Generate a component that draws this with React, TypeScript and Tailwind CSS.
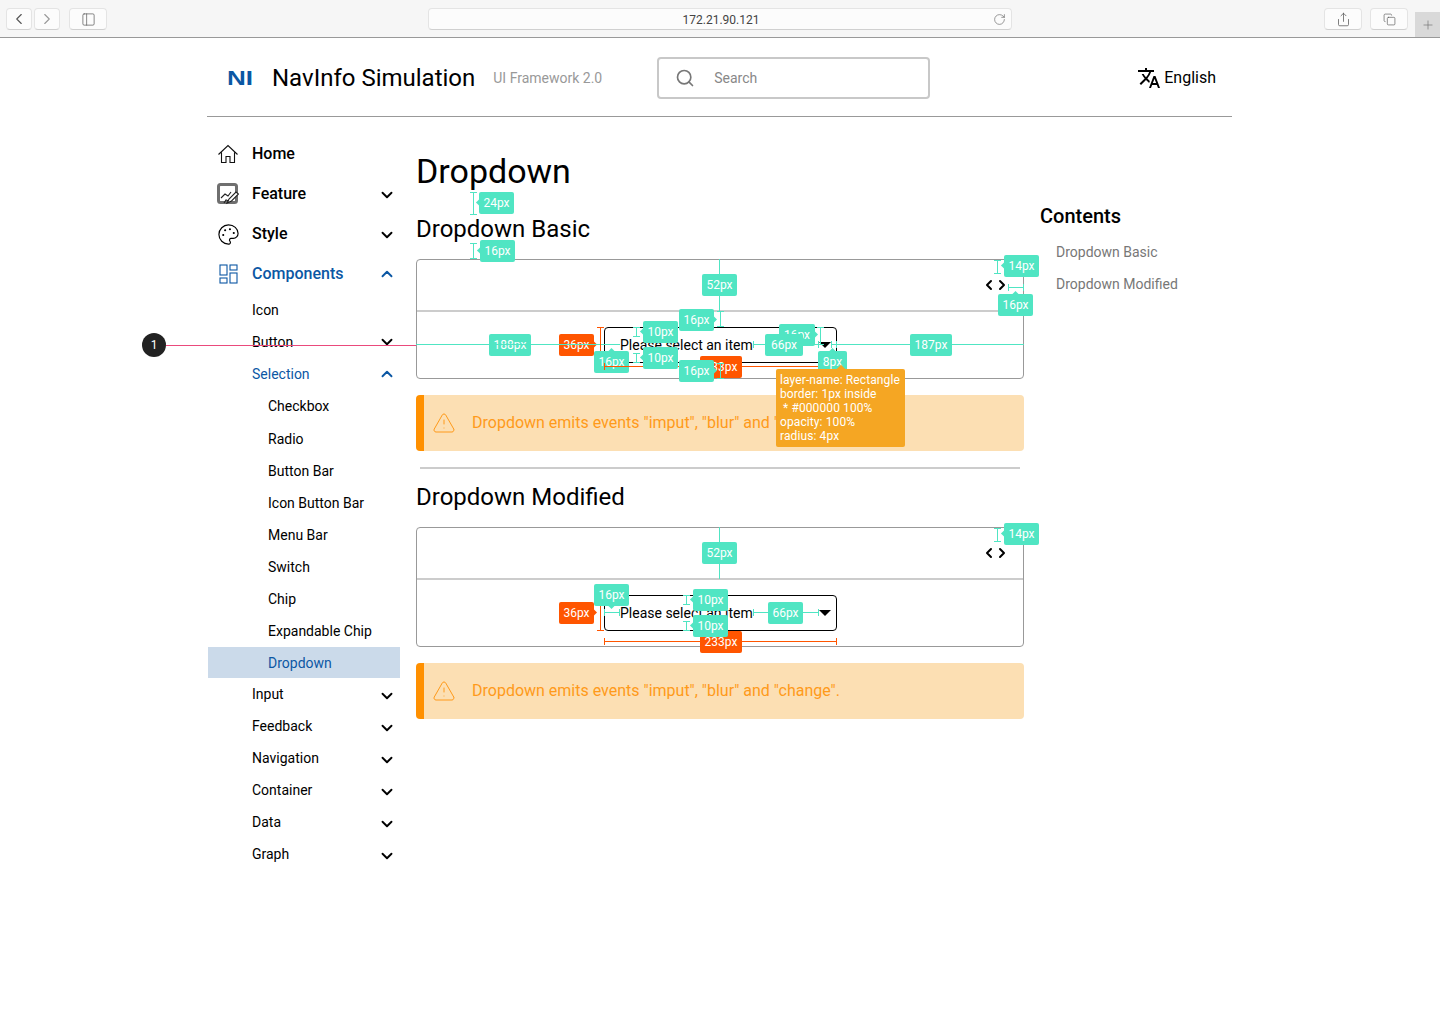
import { ChevronDown, ChevronLeft, ChevronRight, ChevronUp, Copy, Palette, PanelLeft, Plus, RotateCw, Search, Share, TriangleAlert } from "lucide-react";
import { MdTranslate } from "react-icons/md";
import type { ReactNode } from "react";

const SUB_TOP = ["Input", "Feedback", "Navigation", "Container", "Data", "Graph"];
const SELECTION = ["Radio", "Button Bar", "Icon Button Bar", "Menu Bar", "Switch", "Chip", "Expandable Chip"];

function HomeIcon() {
  return (
    <svg viewBox="0 0 22 22" className="h-[22px] w-[22px]" fill="none" stroke="#111" strokeWidth="1.1">
      <path d="M1.5 11.5L11 2.5l9.5 9M4.5 9.5v10h4.5v-6h4v6h4.5v-10" />
    </svg>
  );
}

function FeatureIcon() {
  return (
    <svg viewBox="0 0 22 22" className="h-[22px] w-[22px]" fill="none">
      <rect x="1.5" y="1.5" width="18" height="18" rx="2" stroke="#6f6f6f" strokeWidth="3" />
      <rect x="3" y="4" width="15" height="13" fill="#fff" />
      <path d="M4 15l4-4 3 2 3-4" stroke="#222" strokeWidth="1.1" />
      <path d="M10 20l2-4 7-7 2.5 2-7 7z" fill="#fff" stroke="#222" strokeWidth="1.1" />
      <path d="M7 20l2-3 3 1" stroke="#222" strokeWidth="1.1" />
    </svg>
  );
}

function ComponentsIcon() {
  return (
    <svg viewBox="0 0 20 20" className="ml-0.5 h-5 w-5" fill="none" stroke="#0b57a4" strokeWidth="1.1">
      <rect x="1" y="1" width="7" height="10" />
      <rect x="11" y="1" width="7" height="5" />
      <rect x="1" y="14" width="7" height="5" />
      <rect x="11" y="9" width="7" height="10" />
    </svg>
  );
}

function TopItem({ icon, label, open, active }: { icon: ReactNode; label: string; open?: boolean; active?: boolean }) {
  return (
    <div className={`flex h-10 items-center pl-[9px] pr-1 ${active ? "text-[#0b57a4]" : "text-black"}`}>
      <span className="flex w-[35px] items-center">{icon}</span>
      <span className="flex-1 text-base font-medium">{label}</span>
      {open === undefined ? null : open ? <ChevronUp size={18} strokeWidth={2.5} /> : <ChevronDown size={18} strokeWidth={2.5} className="mt-0.5" />}
    </div>
  );
}

function SubItem({ label, open, active, low }: { label: string; open?: boolean; active?: boolean; low?: boolean }) {
  return (
    <div className={`flex h-8 items-center pl-11 pr-1 text-sm ${active ? "text-[#0b57a4]" : "text-black"}`}>
      <span className="flex-1">{label}</span>
      {open === undefined ? null : open ? <ChevronUp size={18} strokeWidth={2.5} /> : <ChevronDown size={18} strokeWidth={2.5} className={low ? "mt-1" : ""} />}
    </div>
  );
}

function Sidebar() {
  return (
    <aside className="ml-px w-[192px] shrink-0 pt-[17px]">
      <TopItem icon={<HomeIcon />} label="Home" />
      <TopItem icon={<FeatureIcon />} label="Feature" open={false} />
      <TopItem icon={<Palette size={23} strokeWidth={1.2} />} label="Style" open={false} />
      <TopItem icon={<ComponentsIcon />} label="Components" open active />
      <SubItem label="Icon" />
      <SubItem label="Button" open={false} />
      <SubItem label="Selection" open active />
      <div className="mb-px flex h-8 items-center pl-[60px] text-sm text-black">Checkbox</div>
      {SELECTION.map((item) => (
        <div key={item} className="flex h-8 items-center pl-[60px] text-sm text-black">
          {item}
        </div>
      ))}
      <div className="flex h-[31px] items-center bg-[#cbdaea] pl-[60px] text-sm text-[#0b57a4]">Dropdown</div>
      {SUB_TOP.map((item) => (
        <SubItem key={item} label={item} open={false} low />
      ))}
    </aside>
  );
}

function Demo() {
  return (
    <div className="h-[120px] rounded border border-[#999]">
      <div className="flex h-[50px] items-center justify-end pr-[13px]">
        <ChevronLeft size={16} strokeWidth={3} className="text-black" />
        <ChevronRight size={16} strokeWidth={3} className="-ml-[3px] text-black" />
      </div>
      <div className="h-0.5 bg-[#ccc]" />
      <div className="flex justify-center pt-[15px]">
        <div className="ml-px flex h-9 w-[233px] items-center rounded border border-black pl-[15px] pr-[5px] text-sm text-black">
          <span className="flex-1">Please select an item</span>
          <span className="h-0 w-0 border-x-[6px] border-t-[6px] border-x-transparent border-t-black" />
        </div>
      </div>
    </div>
  );
}

function Notice() {
  return (
    <div className="mt-4 flex h-14 items-center rounded border-l-8 border-[#ff9000] bg-[#fcdfb3] pl-2 text-base text-[#ff9a1a]">
      <TriangleAlert size={24} strokeWidth={1} />
      <span className="ml-4">Dropdown emits events "imput", "blur" and "change".</span>
    </div>
  );
}

/* ---- The redline overlay ---- */

function Tag({ className, arrow, children }: { className: string; arrow?: string; children: string }) {
  return (
    <div className={`absolute flex h-[22px] items-center justify-center rounded-[2px] text-xs text-white ${className}`}>
      {arrow ? <span className={`absolute h-[5px] w-[5px] rotate-45 bg-inherit ${arrow}`} /> : null}
      <span className="relative">{children}</span>
    </div>
  );
}

function Ruler({ className }: { className: string }) {
  return <div className={`absolute ${className}`} />;
}

const TEAL = "bg-[#50e5c3]";
const RED = "bg-[#ff5500]";
const V = "w-[7px] border-y border-[#50e5c3] bg-[linear-gradient(#50e5c3,#50e5c3)] bg-[length:1px_100%] bg-center bg-no-repeat";
const VR = "w-[7px] border-y border-[#ff5500] bg-[linear-gradient(#ff5500,#ff5500)] bg-[length:1px_100%] bg-center bg-no-repeat";
const H = "h-[7px] border-x border-[#50e5c3] bg-[linear-gradient(#50e5c3,#50e5c3)] bg-[length:100%_1px] bg-center bg-no-repeat";
const HR = "h-[7px] border-x border-[#ff5500] bg-[linear-gradient(#ff5500,#ff5500)] bg-[length:100%_1px] bg-center bg-no-repeat";

function Redlines() {
  return (
    <div className="pointer-events-none absolute inset-0">
      <div className="absolute left-[142px] top-[333px] flex h-6 w-6 items-center justify-center rounded-full bg-[#222] text-xs text-white">1</div>
      <Ruler className="left-[166px] top-[345px] h-px w-[250px] bg-[#ea4a7c]" />

      {/* Dropdown Basic */}
      <Ruler className={`left-[470px] top-[192px] h-[23px] ${V}`} />
      <Tag className={`left-[479px] top-[192px] w-[35px] ${TEAL}`} arrow="-left-[2px] top-2">24px</Tag>
      <Ruler className={`left-[470px] top-[243px] h-4 ${V}`} />
      <Tag className={`left-[480px] top-[240px] w-[35px] ${TEAL}`} arrow="-left-[2px] top-2">16px</Tag>
      <Ruler className={`left-[719px] top-[259px] h-[52px] w-px ${TEAL}`} />
      <Tag className={`left-[702px] top-[274px] w-[35px] ${TEAL}`}>52px</Tag>
      <Ruler className={`left-[994px] top-[260px] h-[14px] ${V}`} />
      <Tag className={`left-[1004px] top-[255px] w-[35px] ${TEAL}`} arrow="-left-[2px] top-2">14px</Tag>
      <Ruler className={`left-[1008px] top-[284px] w-4 ${H}`} />
      <Tag className={`left-[998px] top-[294px] w-[35px] ${TEAL}`} arrow="left-[15px] -top-[2px]">16px</Tag>
      <Ruler className={`left-[717px] top-[311px] h-4 ${V}`} />
      <Tag className={`left-[679px] top-[309px] w-[35px] ${TEAL}`} arrow="-right-[2px] top-2">16px</Tag>
      <Ruler className={`left-[633px] top-[327px] h-[10px] ${V}`} />
      <Tag className={`left-[643px] top-[321px] w-[35px] ${TEAL}`} arrow="-left-[2px] top-2">10px</Tag>
      <Tag className={`left-[779px] top-[324px] w-[36px] ${TEAL}`} arrow="-right-[2px] top-2">16px</Tag>
      <Ruler className={`left-[817px] top-[327px] h-[18px] ${V}`} />
      <Tag className={`left-[559px] top-[334px] w-[35px] ${RED}`} arrow="-right-[2px] top-2">36px</Tag>
      <Tag className={`left-[489px] top-[334px] w-[42px] ${TEAL}`}>188px</Tag>
      <Ruler className="left-[416px] top-[344px] h-px w-[204px] bg-[#50e5c3]" />
      <Ruler className={`left-[753px] top-[341px] w-[66px] ${H}`} />
      <Tag className={`left-[765px] top-[334px] w-[38px] ${TEAL}`}>66px</Tag>
      <Ruler className={`left-[831px] top-[341px] w-[6px] ${H}`} />
      <Ruler className="left-[837px] top-[344px] h-px w-[187px] bg-[#50e5c3]" />
      <Tag className={`left-[910px] top-[334px] w-[42px] ${TEAL}`}>187px</Tag>
      <Ruler className={`left-[597px] top-[327px] h-9 ${VR}`} />
      <Tag className={`left-[594px] top-[351px] w-[35px] ${TEAL}`} arrow="left-[15px] -top-[2px]">16px</Tag>
      <Ruler className={`left-[633px] top-[353px] h-[10px] ${V}`} />
      <Ruler className={`left-[604px] top-[363px] w-[233px] ${HR}`} />
      <Tag className={`left-[700px] top-[356px] w-[42px] ${RED}`}>233px</Tag>
      <Tag className={`left-[643px] top-[347px] w-[35px] ${TEAL}`} arrow="-left-[2px] top-2">10px</Tag>
      <Ruler className={`left-[717px] top-[363px] h-4 ${V}`} />
      <Tag className={`left-[679px] top-[360px] w-[35px] ${TEAL}`} arrow="-right-[2px] top-2">16px</Tag>
      <Tag className={`left-[818px] top-[351px] w-[29px] ${TEAL}`} arrow="left-[12px] -top-[2px]">8px</Tag>
      <div className="absolute left-[776px] top-[369px] h-[78px] w-[129px] rounded-[2px] bg-[#f5a623] px-1 py-1 text-xs leading-[14px] tracking-[0.1px] text-white">
        <span className="absolute -top-[3px] left-[62px] h-[6px] w-[6px] rotate-45 bg-[#f5a623]" />
        <div>layer-name: Rectangle</div>
        <div>border: 1px inside</div>
        <div className="whitespace-pre"> * #000000 100%</div>
        <div>opacity: 100%</div>
        <div>radius: 4px</div>
      </div>

      {/* Dropdown Modified */}
      <Ruler className={`left-[719px] top-[527px] h-[52px] w-px ${TEAL}`} />
      <Tag className={`left-[702px] top-[542px] w-[35px] ${TEAL}`}>52px</Tag>
      <Ruler className={`left-[994px] top-[528px] h-[14px] ${V}`} />
      <Tag className={`left-[1004px] top-[523px] w-[35px] ${TEAL}`} arrow="-left-[2px] top-2">14px</Tag>
      <Ruler className={`left-[597px] top-[595px] h-9 ${VR}`} />
      <Tag className={`left-[559px] top-[602px] w-[35px] ${RED}`} arrow="-right-[2px] top-2">36px</Tag>
      <Ruler className={`left-[604px] top-[609px] w-4 ${H}`} />
      <Tag className={`left-[594px] top-[584px] w-[35px] ${TEAL}`} arrow="left-[15px] -bottom-[2px]">16px</Tag>
      <Ruler className={`left-[683px] top-[595px] h-[10px] ${V}`} />
      <Tag className={`left-[693px] top-[589px] w-[35px] ${TEAL}`} arrow="-left-[2px] top-2">10px</Tag>
      <Ruler className={`left-[683px] top-[621px] h-[10px] ${V}`} />
      <Ruler className={`left-[604px] top-[638px] w-[233px] ${HR}`} />
      <Tag className={`left-[700px] top-[631px] w-[42px] ${RED}`}>233px</Tag>
      <Tag className={`left-[693px] top-[615px] w-[35px] ${TEAL}`} arrow="-left-[2px] top-2">10px</Tag>
      <Ruler className={`left-[753px] top-[609px] w-[66px] ${H}`} />
      <Tag className={`left-[768px] top-[602px] w-[35px] ${TEAL}`}>66px</Tag>
    </div>
  );
}

function ToolButton({ className, children }: { className: string; children?: ReactNode }) {
  return (
    <div className={`flex h-[22px] items-center justify-center rounded-[4px] border border-[#e4e4e4] border-b-[#d0d0d0] bg-[#fcfcfc] text-[#555] ${className}`}>
      {children}
    </div>
  );
}

function BrowserBar() {
  return (
    <div className="flex h-[38px] items-start border-b border-[#999] bg-[#f6f6f6] pl-[6px] pt-2">
      <ToolButton className="w-[26px]">
        <ChevronLeft size={18} strokeWidth={1.5} />
      </ToolButton>
      <ToolButton className="ml-0.5 w-[26px] text-[#999]">
        <ChevronRight size={18} strokeWidth={1.5} />
      </ToolButton>
      <ToolButton className="ml-[9px] w-[38px]">
        <PanelLeft size={15} strokeWidth={1.1} />
      </ToolButton>
      <div className="relative ml-[321px] flex h-[22px] w-[584px] items-center justify-center rounded-[4px] border border-[#e4e4e4] border-b-[#d0d0d0] bg-[#fcfcfc] pl-0.5 pt-px text-xs text-[#444]">
        172.21.90.121
        <RotateCw size={13} strokeWidth={1.2} className="absolute right-[5px] text-[#666]" />
      </div>
      <ToolButton className="ml-[312px] w-[38px]">
        <Share size={15} strokeWidth={1.2} />
      </ToolButton>
      <ToolButton className="ml-2 w-[38px]">
        <Copy size={13} strokeWidth={1.2} />
      </ToolButton>
      <div className="ml-[7px] mt-1 flex h-[25px] w-[25px] items-center justify-center bg-[#d9d9d9] text-[#777]">
        <Plus size={14} strokeWidth={1.2} />
      </div>
    </div>
  );
}

function Header() {
  return (
    <header className="ml-[207px] flex h-[79px] w-[1025px] items-center border-b border-[#999] pt-[2px]">
      <span className="ml-5 inline-block w-[45px] origin-left scale-x-[1.24] font-['Liberation_Sans',sans-serif] text-[21px] font-bold text-[#0b57a4]">NI</span>
      <span className="text-2xl text-black">NavInfo Simulation</span>
      <span className="ml-[18px] text-sm text-[#999]">UI Framework 2.0</span>
      <div className="ml-[55px] flex h-[42px] w-[273px] items-center rounded border-2 border-[#c8c8c8] pl-4 text-sm text-[#888]">
        <Search size={20} strokeWidth={2} className="text-[#777]" />
        <span className="ml-[19px]">Search</span>
      </div>
      <MdTranslate size={24} className="ml-[207px] text-black" />
      <span className="ml-[3px] text-base text-black">English</span>
    </header>
  );
}

export default function App() {
  return (
    <div className="relative h-[1023px] w-[1440px] overflow-hidden bg-white font-['Roboto',sans-serif]">
      <BrowserBar />
      <Header />
      <div className="ml-[207px] flex">
        <Sidebar />
        <main className="ml-4 w-[608px] shrink-0">
          <h1 className="mt-[30px] text-[34px] leading-[48px] text-black">Dropdown</h1>
          <h2 className="mt-5 text-2xl leading-[28px] text-black">Dropdown Basic</h2>
          <div className="mt-4">
            <Demo />
          </div>
          <Notice />
          <div className="mx-1 mt-4 h-0.5 bg-[#ccc]" />
          <h2 className="mt-[14px] text-2xl leading-[28px] text-black">Dropdown Modified</h2>
          <div className="mt-4">
            <Demo />
          </div>
          <Notice />
        </main>
        <nav className="ml-4 pt-[87px]">
          <div className="text-xl font-medium leading-6 text-black">Contents</div>
          <div className="mt-4 pl-4 text-sm leading-4 text-[#777]">Dropdown Basic</div>
          <div className="mt-4 pl-4 text-sm leading-4 text-[#777]">Dropdown Modified</div>
        </nav>
      </div>
      <Redlines />
    </div>
  );
}
